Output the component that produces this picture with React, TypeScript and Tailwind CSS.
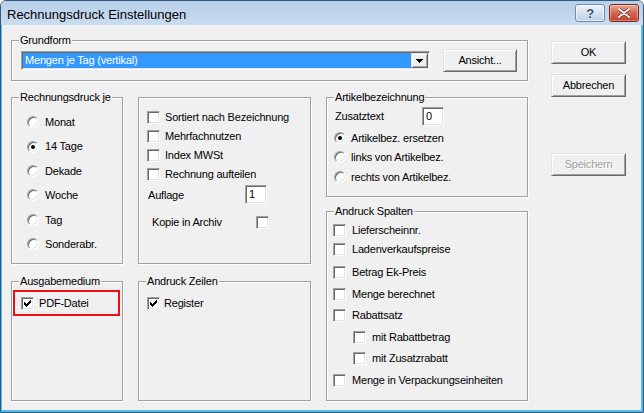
import React from 'react'

const checkPixels = [
  [6, 0, 1], [5, 1, 2], [0, 2, 1], [4, 2, 3], [0, 3, 2], [3, 3, 3], [0, 4, 5], [1, 5, 3], [2, 6, 1],
]

function Check({ checked = false }: { checked?: boolean }) {
  return (
    <span className="inline-flex h-[13px] w-[13px] shrink-0 items-center justify-center border border-t-[#a0a0a0] border-l-[#a0a0a0] border-r-white border-b-white bg-white shadow-[inset_1px_1px_0_#696969,inset_-1px_-1px_0_#e3e3e3]">
      {checked && (
        <svg width="7" height="7" viewBox="0 0 7 7" shapeRendering="crispEdges" className="block">
          {checkPixels.map(([x, y, w], i) => (
            <rect key={i} x={x} y={y} width={w} height={1} fill="#000" />
          ))}
        </svg>
      )}
    </span>
  )
}

function Radio({ checked = false }: { checked?: boolean }) {
  return (
    <span className="inline-flex h-[12px] w-[12px] shrink-0 items-center justify-center rounded-full border border-t-[#a0a0a0] border-l-[#a0a0a0] border-r-white border-b-white bg-white shadow-[inset_1px_1px_0_#696969,inset_-1px_-1px_0_#e3e3e3]">
      {checked && <span className="h-[4px] w-[4px] rounded-full bg-black" />}
    </span>
  )
}

function GroupBox({ label, className = '', children }: { label?: string; className?: string; children?: React.ReactNode }) {
  return (
    <div className={`relative border border-[#a0a0a0] shadow-[inset_1px_1px_0_#fff,1px_1px_0_#fff] ${className}`}>
      {label && (
        <span className="absolute -top-[7px] left-[7px] bg-[#f0f0f0] px-[1px] leading-[13px] whitespace-nowrap">{label}</span>
      )}
      {children}
    </div>
  )
}

function Btn({ children, className = '', disabled = false }: { children: React.ReactNode; className?: string; disabled?: boolean }) {
  return (
    <button
      type="button"
      className={`flex h-[23px] items-center justify-center border border-t-[#e3e3e3] border-l-[#e3e3e3] border-r-[#696969] border-b-[#696969] bg-[#f0f0f0] shadow-[inset_1px_1px_0_#fff,inset_-1px_-1px_0_#a0a0a0] ${disabled ? 'text-[#a0a0a0] [text-shadow:1px_1px_0_#fff]' : 'text-black'} ${className}`}
    >
      {children}
    </button>
  )
}

function TextBox({ value }: { value: string }) {
  return (
    <div className="flex h-[19px] w-[22px] items-center border border-t-[#a0a0a0] border-l-[#a0a0a0] border-r-white border-b-white bg-white pl-[3px] shadow-[inset_1px_1px_0_#696969,inset_-1px_-1px_0_#e3e3e3]">
      {value}
    </div>
  )
}

const perioden = ['Monat', '14 Tage', 'Dekade', 'Woche', 'Tag', 'Sonderabr.']

const spalten = [
  { label: 'Lieferscheinnr.', mt: 'mt-[9px]', indent: false },
  { label: 'Ladenverkaufspreise', mt: 'mt-[1px]', indent: false },
  { label: 'Betrag Ek-Preis', mt: 'mt-[5px]', indent: false },
  { label: 'Menge berechnet', mt: 'mt-[4px]', indent: false },
  { label: 'Rabattsatz', mt: 'mt-[3px]', indent: false },
  { label: 'mit Rabattbetrag', mt: 'mt-[4px]', indent: true },
  { label: 'mit Zusatzrabatt', mt: 'mt-[3px]', indent: true },
  { label: 'Menge in Verpackungseinheiten', mt: 'mt-[4px]', indent: false },
]

export default function App() {
  return (
    <div className="flex h-[413px] w-[644px] flex-col overflow-hidden rounded-t-[6px] border border-[#35597d] font-['Liberation_Sans',Arial,sans-serif] text-[11px] tracking-[-0.2px] text-black">
      {/* title bar */}
      <div className="flex h-[24px] shrink-0 items-start justify-between bg-gradient-to-b from-[#b7cfe9] to-[#cadcf0] pt-[3px] pr-[4px]">
        <span className="pl-[6px] pt-[3px] text-[13px] leading-[15px] tracking-normal">Rechnungsdruck Einstellungen</span>
        <div className="flex gap-[4px]">
          <div className="flex h-[18px] w-[30px] items-center justify-center rounded-[3px] border border-[#6f8db0] bg-gradient-to-b from-[#eef4fb] via-[#d4e2f1] to-[#bcd1e8] shadow-[inset_0_0_0_1px_rgba(255,255,255,0.6)]">
            <span className="text-[13px] font-bold leading-none text-[#3a4f68] [text-shadow:0_0_2px_#fff]">?</span>
          </div>
          <div className="flex h-[18px] w-[30px] items-center justify-center rounded-[3px] border border-[#7c2b20] bg-gradient-to-b from-[#e9a996] via-[#d4674f] to-[#c1412a] shadow-[inset_0_0_0_1px_rgba(255,255,255,0.35)]">
            <svg width="12" height="10" viewBox="0 0 12 10">
              <path d="M1 1l10 8M11 1L1 9" stroke="#5a1a12" strokeWidth="3.2" strokeLinecap="round" />
              <path d="M1 1l10 8M11 1L1 9" stroke="#fff" strokeWidth="2" strokeLinecap="round" />
            </svg>
          </div>
        </div>
      </div>

      {/* body */}
      <div className="flex flex-1 border-l border-r-2 border-b-2 border-[#52bdec] bg-[#f0f0f0]">
        <div className="w-[526px] pl-[9px] pt-[15px]">
          <GroupBox label="Grundform" className="flex h-[41px] w-[517px] items-center pl-[9px]">
            <div className="flex h-[19px] w-[409px] border border-t-[#a0a0a0] border-l-[#a0a0a0] border-r-white border-b-white shadow-[inset_1px_1px_0_#696969,inset_-1px_-1px_0_#e3e3e3] bg-white p-[1px]">
              <div className="flex flex-1 items-center bg-[#3399ff] pl-[2px] text-white">Mengen je Tag (vertikal)</div>
              <div className="flex w-[17px] items-center justify-center border border-t-[#e3e3e3] border-l-[#e3e3e3] border-r-[#696969] border-b-[#696969] bg-[#f0f0f0] shadow-[inset_1px_1px_0_#fff,inset_-1px_-1px_0_#a0a0a0]">
                <svg width="7" height="4" viewBox="0 0 7 4" shapeRendering="crispEdges">
                  <path d="M0 0h7v1H6v1H5v1H4v1H3V3H2V2H1V1H0z" fill="#000" />
                </svg>
              </div>
            </div>
            <Btn className="ml-[13px] w-[74px]">Ansicht...</Btn>
          </GroupBox>

          <div className="mt-[16px] flex gap-[15px]">
            <div className="flex w-[112px] flex-col gap-[17px]">
              <GroupBox label="Rechnungsdruck je" className="h-[167px] pt-[12px]">
                {perioden.map((p, i) => (
                  <div key={p} className="flex h-[24.4px] items-center gap-[6px] pl-[15px]">
                    <Radio checked={i === 1} />
                    <span>{p}</span>
                  </div>
                ))}
              </GroupBox>
              <GroupBox label="Ausgabemedium" className="h-[120px] pt-[8px]">
                <div className="ml-[1px] flex h-[26px] w-[107px] items-center gap-[5px] border-2 border-[#ee1010] pl-[6px]">
                  <Check checked />
                  <span>PDF-Datei</span>
                </div>
              </GroupBox>
            </div>

            <div className="flex w-[173px] flex-col gap-[17px]">
              <GroupBox className="h-[167px] pt-[10px]">
                {['Sortiert nach Bezeichnung', 'Mehrfachnutzen', 'Index MWSt', 'Rechnung aufteilen'].map((t) => (
                  <div key={t} className="flex h-[19px] items-center gap-[5px] pl-[8px]">
                    <Check />
                    <span>{t}</span>
                  </div>
                ))}
                <div className="flex h-[20px] items-center pl-[9px]">
                  <span className="w-[97px] pt-[2px]">Auflage</span>
                  <TextBox value="1" />
                </div>
                <div className="mt-[8px] flex h-[20px] items-center pl-[13px]">
                  <span className="w-[104px]">Kopie in Archiv</span>
                  <Check />
                </div>
              </GroupBox>
              <GroupBox label="Andruck Zeilen" className="h-[120px] pt-[11px]">
                <div className="flex h-[20px] items-center gap-[4px] pl-[8px]">
                  <Check checked />
                  <span>Register</span>
                </div>
              </GroupBox>
            </div>

            <div className="flex w-[202px] flex-col gap-[14px]">
              <GroupBox label="Artikelbezeichnung" className="h-[100px] pt-[9px]">
                <div className="flex h-[19px] items-center pl-[8px]">
                  <span className="w-[87px]">Zusatztext</span>
                  <TextBox value="0" />
                </div>
                <div className="mt-[2px]">
                  {['Artikelbez. ersetzen', 'links von Artikelbez.', 'rechts von Artikelbez.'].map((t, i) => (
                    <div key={t} className="flex h-[19.5px] items-center gap-[5px] pl-[7px]">
                      <Radio checked={i === 0} />
                      <span>{t}</span>
                    </div>
                  ))}
                </div>
              </GroupBox>
              <GroupBox label="Andruck Spalten" className="h-[190px]">
                {spalten.map((s) => (
                  <div key={s.label} className={`flex h-[18px] items-center gap-[6px] ${s.indent ? 'pl-[26px]' : 'pl-[6px]'} ${s.mt}`}>
                    <Check />
                    <span>{s.label}</span>
                  </div>
                ))}
              </GroupBox>
            </div>
          </div>
        </div>

        <div className="ml-[23px] flex flex-col pt-[16px]">
          <Btn className="w-[75px]">OK</Btn>
          <Btn className="mt-[10px] w-[75px]">Abbrechen</Btn>
          <Btn className="mt-[56px] w-[75px]" disabled>Speichern</Btn>
        </div>
      </div>
    </div>
  )
}
